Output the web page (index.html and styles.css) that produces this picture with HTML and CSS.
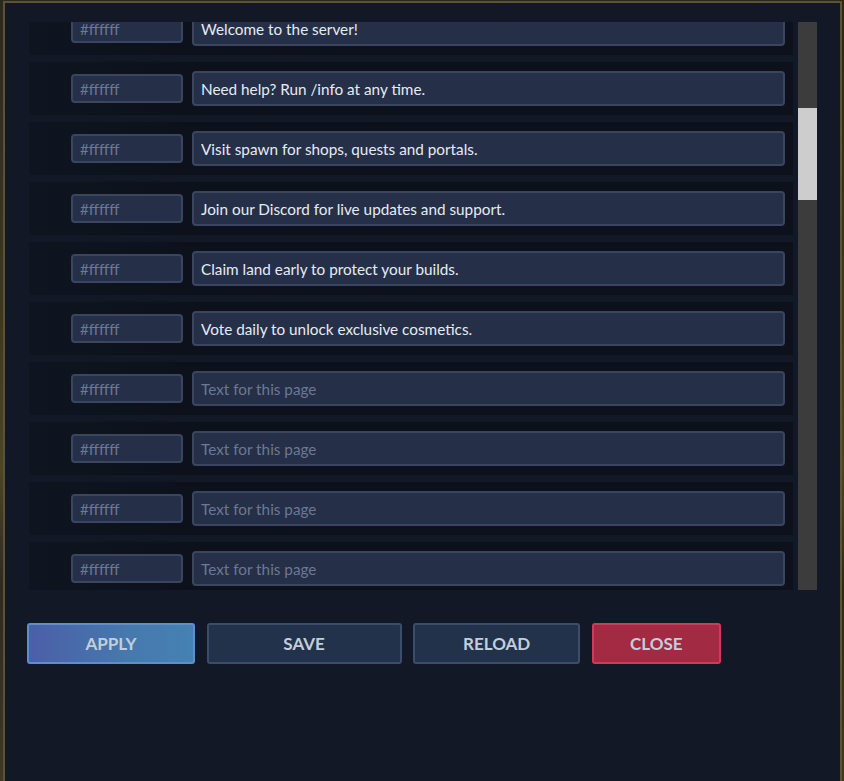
FILE: index.html
```html
<!DOCTYPE html>
<html lang="en">
<head>
    <meta charset="UTF-8">
    <meta name="viewport" content="width=device-width, initial-scale=1.0">
    <title>Join Messages</title>
    <link rel="stylesheet" href="styles.css">
</head>
<body>
    <div class="panel">
        <div class="viewport">
            <div class="list">
                <div class="rows">
                    <div class="row">
                        <input class="color" type="text" placeholder="#ffffff">
                        <input class="text" type="text" placeholder="Text for this page" value="Welcome to the server!">
                    </div>
                    <div class="row">
                        <input class="color" type="text" placeholder="#ffffff">
                        <input class="text" type="text" placeholder="Text for this page" value="Need help? Run /info at any time.">
                    </div>
                    <div class="row">
                        <input class="color" type="text" placeholder="#ffffff">
                        <input class="text" type="text" placeholder="Text for this page" value="Visit spawn for shops, quests and portals.">
                    </div>
                    <div class="row">
                        <input class="color" type="text" placeholder="#ffffff">
                        <input class="text" type="text" placeholder="Text for this page" value="Join our Discord for live updates and support.">
                    </div>
                    <div class="row">
                        <input class="color" type="text" placeholder="#ffffff">
                        <input class="text" type="text" placeholder="Text for this page" value="Claim land early to protect your builds.">
                    </div>
                    <div class="row">
                        <input class="color" type="text" placeholder="#ffffff">
                        <input class="text" type="text" placeholder="Text for this page" value="Vote daily to unlock exclusive cosmetics.">
                    </div>
                    <div class="row">
                        <input class="color" type="text" placeholder="#ffffff">
                        <input class="text" type="text" placeholder="Text for this page">
                    </div>
                    <div class="row">
                        <input class="color" type="text" placeholder="#ffffff">
                        <input class="text" type="text" placeholder="Text for this page">
                    </div>
                    <div class="row">
                        <input class="color" type="text" placeholder="#ffffff">
                        <input class="text" type="text" placeholder="Text for this page">
                    </div>
                    <div class="row">
                        <input class="color" type="text" placeholder="#ffffff">
                        <input class="text" type="text" placeholder="Text for this page">
                    </div>
                </div>
            </div>
            <div class="scrollbar">
                <div class="thumb"></div>
            </div>
        </div>

        <div class="actions">
            <button type="button" class="btn btn-apply">Apply</button>
            <button type="button" class="btn btn-save">Save</button>
            <button type="button" class="btn btn-reload">Reload</button>
            <button type="button" class="btn btn-close">Close</button>
        </div>
    </div>
</body>
</html>
```

FILE: styles.css
```css
html, body {
    height: 100%;
}
body {
    margin: 0;
    overflow: hidden;
    font-family: Lato, "Open Sans", sans-serif;
    background: linear-gradient(180deg, #2a2a1c 0%, #3a3920 40%, #4a4626 60%, #2c2b1e 75%, #3c3a22 100%);
}
.panel {
    box-sizing: border-box;
    height: calc(100% - 1px);
    margin: 1px 2px 0 3px;
    padding: 19px 23px 0 24px;
    background: #121826;
    border: 2px solid #5e5232;
    border-bottom: none;
}
.viewport {
    display: flex;
    gap: 5px;
    height: 568px;
}
.list {
    flex: 1;
    overflow: hidden;
}
.rows {
    margin-top: -20px;
}
.row {
    display: flex;
    align-items: center;
    gap: 9px;
    height: 53px;
    margin-bottom: 7px;
    padding: 0 8px 0 42px;
    background: linear-gradient(90deg, #0f1520 0%, #0c111b 20%, #0c111b 100%);
}
.row input {
    box-sizing: border-box;
    padding: 0 7px;
    font-family: inherit;
    font-size: 15.3px;
    color: #e6ebf2;
    background: #252f47;
    border: 2px solid #3a4660;
    border-radius: 4px;
    outline: none;
}
.row input::placeholder {
    color: #6b7896;
}
.color {
    width: 112px;
    height: 29px;
}
.text {
    flex: 1;
    height: 35px;
}
.scrollbar {
    width: 19px;
    background: #3c3c3c;
}
.thumb {
    height: 92px;
    margin-top: 86px;
    background: #cdcdcd;
}
.actions {
    display: flex;
    gap: 11.6px;
    margin: 33px 0 0 -2px;
}
.btn {
    height: 41px;
    font-family: inherit;
    font-size: 17px;
    font-weight: bold;
    text-transform: uppercase;
    color: #c3cedb;
    background: #22324b;
    border: 2px solid #3b4d6b;
    border-radius: 3px;
    cursor: pointer;
}
.btn-apply {
    width: 168px;
    background: linear-gradient(90deg, #4b5ea8 0%, #4679ad 60%, #4581b2 100%);
    border-color: #5b8fd0;
}
.btn-save {
    width: 195px;
}
.btn-reload {
    width: 167px;
}
.btn-close {
    width: 129px;
    background: #a22a43;
    border-color: #d13a5c;
}
```
